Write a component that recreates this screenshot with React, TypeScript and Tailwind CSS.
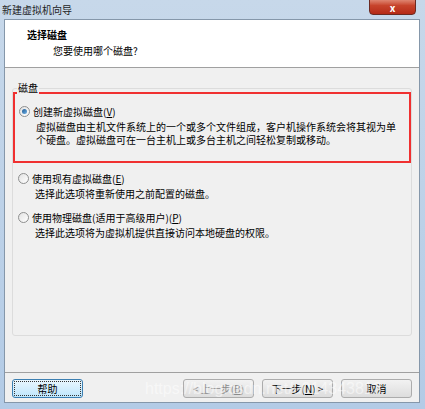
import React from "react";

const font = { fontFamily: '"Noto Sans CJK SC", "DejaVu Sans", sans-serif' };

function Radio({ checked }: { checked?: boolean }) {
  return (
    <span className="relative inline-flex h-[11px] w-[11px] shrink-0 items-center justify-center rounded-full border border-[#8e8f8f] bg-gradient-to-br from-[#e2e2e2] to-[#ffffff]">
      {checked && <span className="h-[5px] w-[5px] rounded-full bg-gradient-to-br from-[#1d5a92] to-[#6fb2e8]" />}
    </span>
  );
}

function Option({
  label,
  hot,
  desc,
  checked,
}: {
  label: string;
  hot: string;
  desc: string[];
  checked?: boolean;
}) {
  return (
    <div className="flex flex-col">
      <div className="flex h-[14px] items-center gap-[3px]">
        <Radio checked={checked} />
        <span>
          {label}(<u>{hot}</u>)
        </span>
      </div>
      <div className="mt-[2px] pl-[17px] leading-[13px]">
        {desc.map((d) => (
          <div key={d}>{d}</div>
        ))}
      </div>
    </div>
  );
}

function Btn({ children, primary, disabled }: { children: React.ReactNode; primary?: boolean; disabled?: boolean }) {
  return (
    <div
      className={
        "flex h-[19px] w-[71px] items-center justify-center rounded-[3px] border text-[10px] " +
        (primary
          ? "border-[#3c7fb1] bg-gradient-to-b from-[#eaf6fd] to-[#bee6fd] outline-1 outline-dotted outline-offset-[-3px] outline-[#333]"
          : "border-[#acacac] bg-gradient-to-b from-[#f2f2f2] to-[#dddddd]") +
        (disabled ? " text-[#8a8a8a]" : " text-black")
      }
    >
      {children}
    </div>
  );
}

export default function App() {
  return (
    <div className="relative flex h-[409px] w-[425px] flex-col overflow-hidden bg-gradient-to-b from-[#c7d8ea] to-[#b3cbe6] text-[10px] text-black" style={font}>
      <div className="flex h-[19px] items-center justify-between pl-[2px]">
        <span className="text-[10px] text-[#1e1e1e]">新建虚拟机向导</span>
        <div className="mr-[9px] -mt-[8px] flex h-[19px] w-[47px] items-end justify-center rounded-b-[4px] border border-[#6b2a22] bg-gradient-to-b from-[#e8a493] via-[#c7442c] to-[#b52a17] pb-[1px] text-[10px] font-bold leading-none text-white">
          x
        </div>
      </div>
      <div className="mb-[6px] ml-[4px] mr-[5px] flex flex-1 flex-col border border-[#8597aa] bg-[#f0f0f0]">
        <div className="h-[48px] border-b border-[#a0a0a0] bg-white pl-[22px] pt-[7px]">
          <div className="font-bold leading-[16px]">选择磁盘</div>
          <div className="pl-[26px] leading-[16px]">您要使用哪个磁盘?</div>
        </div>
        <div className="flex-1 px-[7px] pt-[20px]">
          <div className="relative h-[248px] rounded-[3px] border border-[#dcdcdc]">
            <span className="absolute -top-[8px] left-[4px] bg-[#f0f0f0] px-[1px] leading-[14px]">磁盘</span>
            <div className="mt-[3px] flex flex-col">
              <div className="h-[71px] border-2 border-[#f03030] pl-[4px] pt-[10px]">
                <Option
                  checked
                  label="创建新虚拟磁盘"
                  hot="V"
                  desc={[
                    "虚拟磁盘由主机文件系统上的一个或多个文件组成，客户机操作系统会将其视为单",
                    "个硬盘。虚拟磁盘可在一台主机上或多台主机之间轻松复制或移动。",
                  ]}
                />
              </div>
              <div className="flex flex-col gap-[10px] pl-[5px] pt-[8px]">
                <Option label="使用现有虚拟磁盘" hot="E" desc={["选择此选项将重新使用之前配置的磁盘。"]} />
                <Option label="使用物理磁盘(适用于高级用户)" hot="P" desc={["选择此选项将为虚拟机提供直接访问本地硬盘的权限。"]} />
              </div>
            </div>
          </div>
        </div>
        <div className="flex h-[30px] items-center border-t border-[#a0a0a0] px-[7px] pt-[1px]">
          <Btn primary>帮助</Btn>
          <div className="flex-1" />
          <div className="flex gap-[8px]">
            <Btn disabled>
              &lt; 上一步(<u>B</u>)
            </Btn>
            <Btn>
              下一步(<u>N</u>) &gt;
            </Btn>
            <Btn>取消</Btn>
          </div>
        </div>
      </div>
      <div className="pointer-events-none absolute left-[145px] top-[379px] text-[16px] leading-[20px] text-white/50" style={{ fontFamily: '"Liberation Sans", sans-serif' }}>
        https://blog.csdn.net/u014343813
      </div>
    </div>
  );
}
